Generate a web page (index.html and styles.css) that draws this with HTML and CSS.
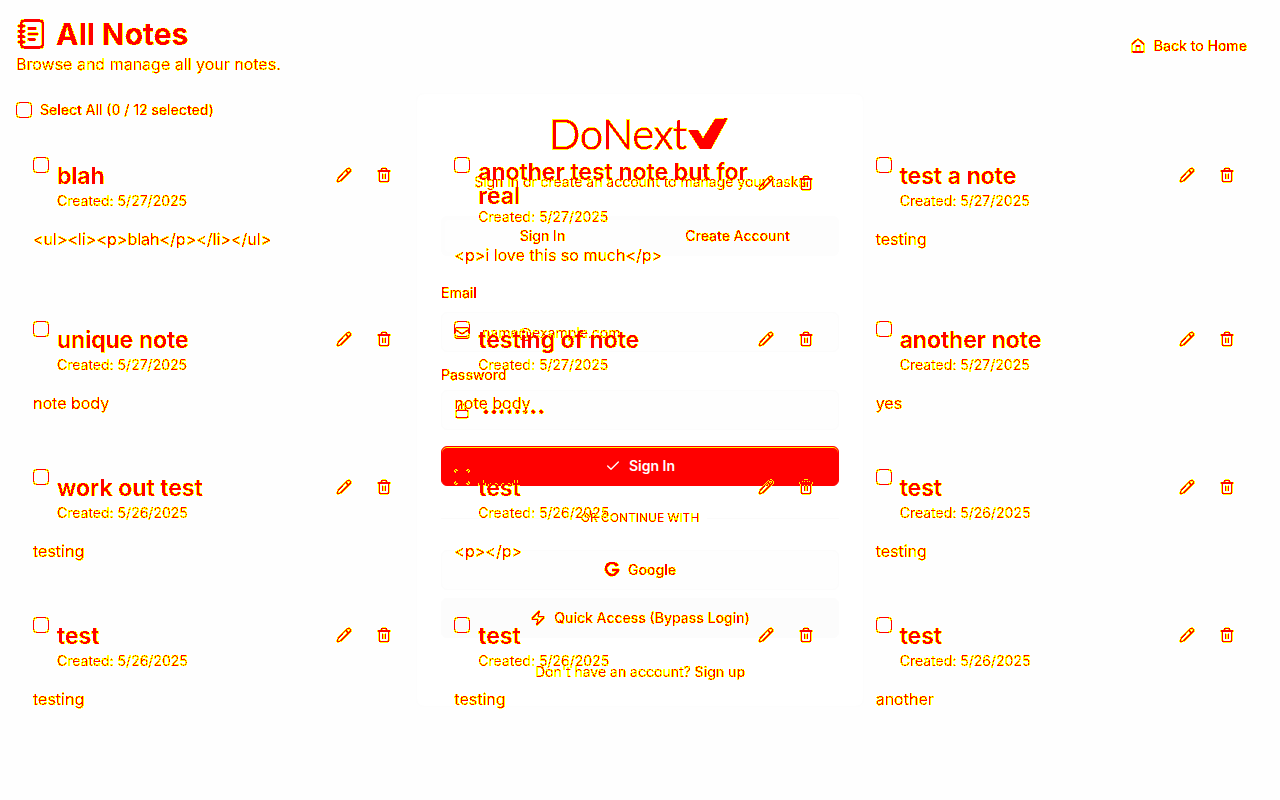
FILE: index.html
```html
<!DOCTYPE html>
<html lang="en">
<head>
<meta charset="utf-8">
<meta name="viewport" content="width=device-width, initial-scale=1">
<title>All Notes</title>
<link rel="stylesheet" href="styles.css">
</head>
<body>
<svg class="defs" width="0" height="0" aria-hidden="true">
  <filter id="edge" x="0" y="0" width="1" height="1" color-interpolation-filters="sRGB">
    <feColorMatrix values="0 0 0 0 1  0 0 0 1 0  0 0 0 0 0  0 0 0 1 0"/>
    <feComponentTransfer>
      <feFuncG type="discrete" tableValues="1 1 1 1 1 1 1 0 0 0"/>
      <feFuncA type="discrete" tableValues="0 1 1 1 1 1 1 1 1 1 1 1 1 1 1 1 1 1 1 1 1 1 1 1 1 1 1 1 1 1 1 1"/>
    </feComponentTransfer>
  </filter>
  <symbol id="pencil" viewBox="0 0 24 24"><path d="M21.2 6.8a1 1 0 0 0-4-4L3.8 16.2a2 2 0 0 0-.5.8L2 21.400a.5.5 0 0 0 .6.6l4.400-1.300a2 2 0 0 0 .8-.5zM15 5l4 4"/></symbol>
  <symbol id="trash" viewBox="0 0 24 24"><path d="M3 6h18M19 6v14a2 2 0 0 1-2 2H7a2 2 0 0 1-2-2V6M8 6V4a2 2 0 0 1 2-2h4a2 2 0 0 1 2 2v2M10 11v6M14 11v6"/></symbol>
</svg>
<main class="stage">
  <section class="login">
    <div class="logo edge"><span>DoNext</span><svg width="40" height="32" viewBox="0 0 40 32"><path fill="red" stroke="none" d="M0 12h10l5 8L27 1l13-1-17 31H12z"/><path stroke="#fff" stroke-width="1" d="M28 6l2-1M25 15l2-2"/></svg></div>
    <p class="lead edge">Sign in or create an account to manage your tasks</p>
    <div class="tabs"><button class="tab active"><span class="edge">Sign In</span></button><button class="tab"><span class="edge">Create Account</span></button></div>
    <form>
      <label class="label email-label edge" for="email">Email</label>
      <div class="field"><div class="field-in edge"><svg class="icon" viewBox="0 0 24 24"><rect x="2" y="4" width="20" height="16" rx="2"/><path d="m22 7-9 5.700a2 2 0 0 1-2 0L2 7"/></svg><input id="email" type="email" placeholder="name@example.com"></div></div>
      <label class="label password-label edge" for="password">Password</label>
      <div class="field"><div class="field-in edge"><svg class="icon" viewBox="0 0 24 24"><rect x="3" y="11" width="18" height="11" rx="2"/><path d="M7 11V7a5 5 0 0 1 10 0v4"/></svg><input id="password" type="password" placeholder="••••••••"></div></div>
      <button class="btn submit" type="button"><svg class="icon" viewBox="0 0 24 24"><path d="M20 6 9 17l-5-5"/></svg>Sign In</button>
    </form>
    <div class="divider"><span class="edge">OR CONTINUE WITH</span></div>
    <button class="btn alt"><span class="btn-in edge"><svg class="icon google" viewBox="0 0 24 24"><path d="M20 6A9 9 0 1 0 21 12h-9"/></svg>Google</span></button>
    <button class="btn alt quick"><span class="btn-in edge"><svg class="icon" viewBox="0 0 24 24"><path d="M4 14a1 1 0 0 1-.8-1.600L13 2.200a.5.5 0 0 1 .9.500L12 8.700A1 1 0 0 0 13 10h7a1 1 0 0 1 .8 1.600L11 21.800a.5.5 0 0 1-.9-.5l1.900-6A1 1 0 0 0 11 14z"/></svg>Quick Access (Bypass Login)</span></button>
    <p class="signup edge">Don't have an account? <a href="#">Sign up</a></p>
  </section>
  <section class="notes edge">
    <header class="top">
      <div>
        <h1><svg class="book" viewBox="0 0 24 24"><path d="M2 6h4M2 10h4M2 14h4M2 18h4M9.500 8h5M9.500 12H16M9.500 16H14"/><rect x="4" y="2" width="16" height="20" rx="2"/></svg>All Notes</h1>
        <p class="soft">Browse and manage all your notes.</p>
      </div>
      <a class="home" href="#"><svg class="icon" viewBox="0 0 24 24"><path d="M15 21v-8a1 1 0 0 0-1-1h-4a1 1 0 0 0-1 1v8"/><path d="M3 10a2 2 0 0 1 .7-1.500l7-6a2 2 0 0 1 2.600 0l7 6A2 2 0 0 1 21 10v9a2 2 0 0 1-2 2H5a2 2 0 0 1-2-2z"/></svg>Back to Home</a>
    </header>
    <label class="all"><input type="checkbox">Select All (0 / 12 selected)</label>
    <div class="grid" id="grid"></div>
  </section>
</main>
<script src="notes.js"></script>
</body>
</html>
```
FILE: styles.css
```css
* { box-sizing: border-box; margin: 0; }
body { background: #fefefe; color: rgb(255 0 0 / 95%); font: 14px/20px Inter, sans-serif; }
button, input { font: inherit; color: inherit; }
a { color: inherit; text-decoration: none; }
svg { fill: none; stroke: red; stroke-width: 2; stroke-linecap: round; stroke-linejoin: round; flex: none; }
.defs { display: block; height: 0; }
.edge { filter: url(#edge); }
.soft, .lead, .signup { color: rgb(255 0 0 / 86%); }
.icon { width: 16px; height: 16px; }
.stage { display: grid; min-height: 100vh; }
.login, .notes { grid-area: 1 / 1; }

.login { place-self: center; width: 100%; max-width: 448px; padding: 24px; border: 1px solid #fdfdfd; border-radius: 8px; background: #fff; }
.logo { display: flex; justify-content: center; gap: 1px; height: 32px; padding-right: 3px; font: 300 41px/31px Lato, sans-serif; -webkit-text-stroke: 1px red; }
.lead { margin-top: 22px; text-align: center; }
.tabs { display: grid; grid-template-columns: 1fr 1fr; height: 40px; margin-top: 24px; padding: 4px; border-radius: 6px; background: #fdfdfd; }
.tab { border: 0; border-radius: 4px; background: none; font-weight: 500; }
.tab.active { background: #fefefe; }
.tab span { display: inline-block; }
.label { display: block; font-weight: 500; }
.email-label { margin: 27px 0 9px; }
.password-label { margin: 13px 0 5px; }
.field { height: 40px; border: 1px solid #fcfcfc; border-radius: 6px; background: #fefefe; }
.field-in { display: flex; align-items: center; gap: 12px; height: 100%; padding: 2px 12px 0; }
.field input { flex: 1; min-width: 0; padding: 0; border: 0; outline: 0; background: none; }
.field input::placeholder { color: rgb(255 0 0 / 86%); opacity: 1; }
.btn { display: flex; align-items: center; justify-content: center; gap: 8px; width: 100%; height: 40px; border: 1px solid #fcfcfc; border-radius: 6px; background: #fefefe; font-weight: 500; }
.btn-in { display: flex; align-items: center; gap: 8px; }
.submit { margin-top: 16px; border-color: red; background: red; color: #fff; box-shadow: inset 0 1px #ff0; font-weight: 600; }
.submit svg { stroke: #fff; }
.google { stroke-width: 4; stroke-linecap: butt; }
.divider { display: flex; align-items: center; gap: 8px; height: 16px; margin: 24px 0; font-size: 12px; line-height: 16px; }
.divider::before, .divider::after { content: ""; flex: 1; height: 1px; background: #fbfbfb; }
.quick { margin-top: 8px; background: #fcfcfc; }
.signup { margin-top: 24px; text-align: center; }
.signup a { font-weight: 500; }

.notes { padding: 16px; }
.top { display: flex; align-items: center; justify-content: space-between; }
.top h1 { display: flex; align-items: center; gap: 8px; color: red; font-size: 30px; line-height: 36px; font-weight: 700; }
.top p { font-size: 16px; line-height: 24px; }
.book { width: 32px; height: 32px; }
.home { display: flex; align-items: center; gap: 8px; padding: 10px 17px; font-weight: 500; }
.all { display: flex; align-items: center; gap: 8px; margin-top: 24px; font-weight: 500; }
input[type="checkbox"] { appearance: none; flex: none; width: 16px; height: 16px; border: 1px solid red; border-radius: 4px; }
.grid { display: grid; grid-template-columns: repeat(3, 1fr); gap: 16px; margin-top: 22px; }
.card { padding: 17px 17px 23px; }
.card-head { display: flex; gap: 8px; align-items: flex-start; }
.card-head input { margin-top: -2px; }
.card-main { flex: 1; }
.title-row { display: flex; align-items: center; justify-content: space-between; min-height: 32px; }
.card h2 { padding-top: 1px; margin-bottom: -1px; color: red; font-size: 23px; line-height: 24px; font-weight: 600; }
.actions { display: flex; margin-left: -8px; }
.actions button { display: grid; place-items: center; width: 40px; height: 32px; padding: 0; border: 0; background: none; }
.body { margin-top: 16px; font-size: 16px; line-height: 24px; }
```
FILE: notes.js
```js
const notes = [
  ["blah", "5/27/2025", "<ul><li><p>blah</p></li></ul>"],
  ["another test note but for real", "5/27/2025", "<p>i love this so much</p>"],
  ["test a note", "5/27/2025", "testing"],
  ["unique note", "5/27/2025", "note body"],
  ["testing of note", "5/27/2025", "note body"],
  ["another note", "5/27/2025", "yes"],
  ["work out test", "5/26/2025", "testing"],
  ["test", "5/26/2025", "<p></p>"],
  ["test", "5/26/2025", "testing"],
  ["test", "5/26/2025", "testing"],
  ["test", "5/26/2025", "testing"],
  ["test", "5/26/2025", "another"]
];
const grid = document.getElementById("grid");
for (const [title, date, body] of notes) {
  const card = document.createElement("article");
  card.className = "card";
  card.innerHTML = `<div class="card-head"><input type="checkbox" aria-label="Select note"><div class="card-main">
    <div class="title-row"><h2></h2><div class="actions">
    <button aria-label="Edit"><svg class="icon"><use href="#pencil"/></svg></button>
    <button aria-label="Delete"><svg class="icon"><use href="#trash"/></svg></button></div></div>
    <p class="soft">Created: ${date}</p></div></div><p class="body"></p>`;
  card.querySelector("h2").textContent = title;
  card.querySelector(".body").textContent = body;
  grid.append(card);
}
```
